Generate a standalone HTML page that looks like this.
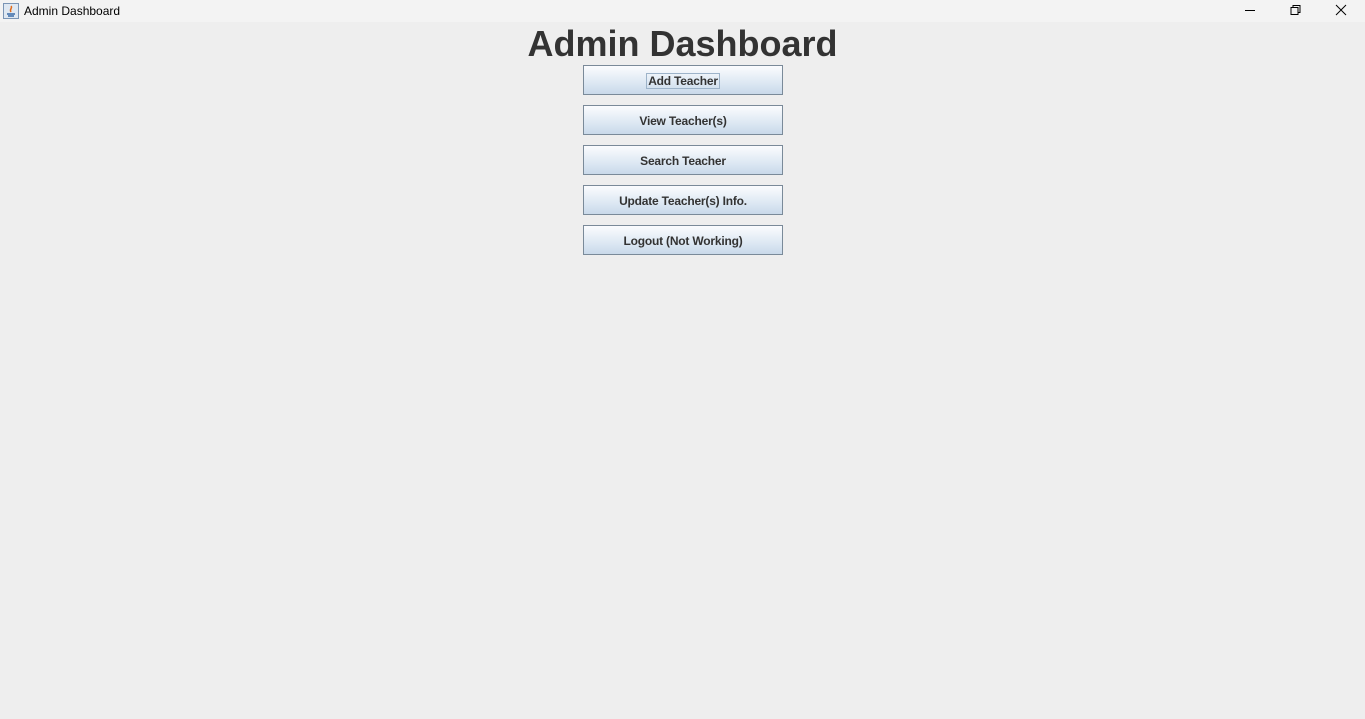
<!DOCTYPE html>
<html><head><style>
body{margin:0;width:1365px;height:719px;background:#eeeeee;font-family:"Liberation Sans",Arial,sans-serif;position:relative;overflow:hidden}
.tb{position:absolute;left:0;top:0;width:1365px;height:22px;background:#f3f3f3}
.tt{position:absolute;left:24px;top:4px;font-size:12px;color:#000}
h1{position:absolute;left:0;width:1365px;top:23px;margin:0;text-align:center;font-size:36px;font-weight:bold;color:#333;line-height:42px}
.b{position:absolute;left:583px;width:198px;height:28px;border:1px solid #7a8a99;background:linear-gradient(#fbfcfe,#dde8f3 60%,#c9d9ea);font-size:12px;font-weight:bold;color:#333;text-align:center;line-height:30px;letter-spacing:-0.2px}
.f{border:1px solid #9db3c9;padding:0 1px}
</style></head><body>
<div class="tb">
<svg style="position:absolute;left:3px;top:3px" width="16" height="16"><rect x="0.5" y="0.5" width="15" height="15" fill="#dfe8f2" stroke="#7b95b5"/><path d="M4 11h8M5 13h6" stroke="#3a6aa8" stroke-width="1.5"/><path d="M8 3c2 2-2 3 0 6" stroke="#e06a1a" stroke-width="1.5" fill="none"/></svg>
<div class="tt">Admin Dashboard</div>
<svg style="position:absolute;left:1240px;top:4px" width="120" height="14"><path d="M5 6.5h10" stroke="#000"/><path d="M51 3.5h7v7h-7zM53 3.5v-2h7v7h-2" stroke="#000" fill="none"/><path d="M96 1l10 10M106 1l-10 10" stroke="#000"/></svg>
</div>
<h1>Admin Dashboard</h1>
<div class="b" style="top:65px"><span class="f">Add Teacher</span></div>
<div class="b" style="top:105px">View Teacher(s)</div>
<div class="b" style="top:145px">Search Teacher</div>
<div class="b" style="top:185px">Update Teacher(s) Info.</div>
<div class="b" style="top:225px">Logout (Not Working)</div>
</body></html>
